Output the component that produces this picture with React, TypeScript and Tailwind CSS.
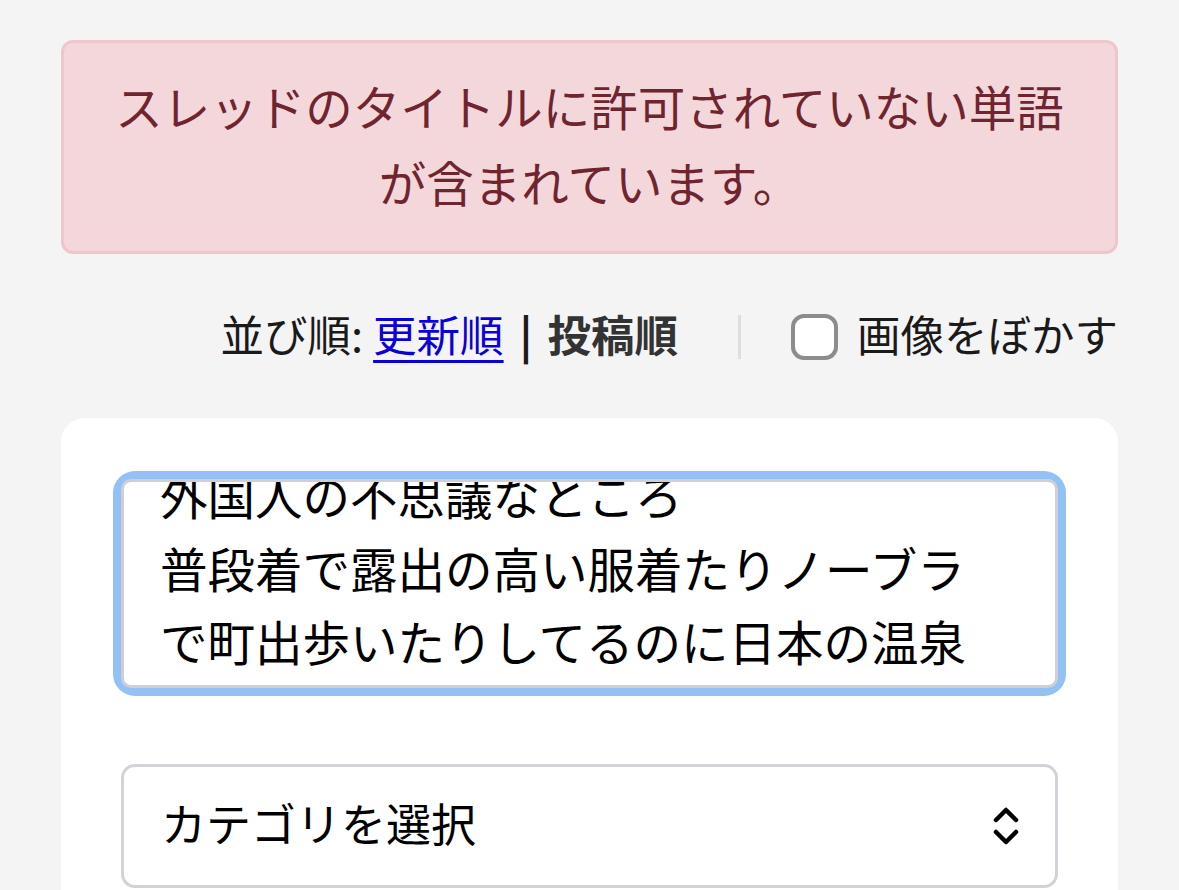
import React from "react";

const jp = { fontFamily: '"Noto Sans CJK JP", "Noto Sans", sans-serif' };

export default function App() {
  return (
    <div
      className="min-h-[890px] w-[1179px] bg-[#f4f4f4] overflow-hidden"
      style={jp}
    >
      <div className="px-[61px] pt-[40px]">
        {/* Alert */}
        <div className="rounded-[12px] border-[3px] border-[#eec6cb] bg-[#f4d7db] px-[36px] pt-[25px] pb-[31px] text-center text-[47.5px] leading-[76px] text-[#6f2530]">
          スレッドのタイトルに許可されていない単語が含まれています。
        </div>

        {/* Sort row */}
        <div className="mt-[60px] flex items-center justify-end text-[43.5px] leading-[46px] text-[#1a1a1a]">
          <span className="-mt-[6px]">並び順:</span>
          <a
            href="#"
            className="-mt-[6px] ml-[10px] text-[#0b00d6] underline decoration-[3px] underline-offset-[8px]"
          >
            更新順
          </a>
          <span className="-mt-[6px] ml-[16px] mr-[15px] font-bold">|</span>
          <span className="-mt-[6px] font-bold text-[#333333]">投稿順</span>
          <span className="ml-[60px] h-[44px] w-[3px] bg-[#dedede]" />
          <span className="ml-[50px] h-[46px] w-[47px] rounded-[13px] border-[4px] border-[#8c8c8f] bg-white" />
          <span className="-mt-[6px] ml-[19px]">画像をぼかす</span>
        </div>

        {/* Card */}
        <div className="mt-[58px] rounded-t-[24px] bg-white px-[60px] pt-[61px] pb-[60px]">
          <div className="rounded-[14px] shadow-[0_0_0_8px_#93c0f5]">
            <div className="h-[209px] overflow-hidden rounded-[10px] border-[3px] border-[#cfcfd4] bg-white px-[36px]">
              <div className="-mt-[24px] text-[47.5px] leading-[73px] text-black">
                <div>外国人の不思議なところ</div>
                <div>普段着で露出の高い服着たりノーブラ</div>
                <div>で町出歩いたりしてるのに日本の温泉</div>
              </div>
            </div>
          </div>

          <div className="mt-[76px] flex h-[124px] items-center justify-between rounded-[14px] border-[3px] border-[#d2d2d8] bg-white pl-[37px] pr-[34px]">
            <span className="-mt-[6px] text-[45px] text-black">カテゴリを選択</span>
            <svg
              width="30"
              height="40"
              viewBox="0 0 30 40"
              fill="none"
              stroke="#000"
              strokeWidth="4.5"
              strokeLinecap="round"
              strokeLinejoin="round"
            >
              <path d="M5 14 L15 4 L25 14" />
              <path d="M5 26 L15 36 L25 26" />
            </svg>
          </div>
        </div>
      </div>
    </div>
  );
}
